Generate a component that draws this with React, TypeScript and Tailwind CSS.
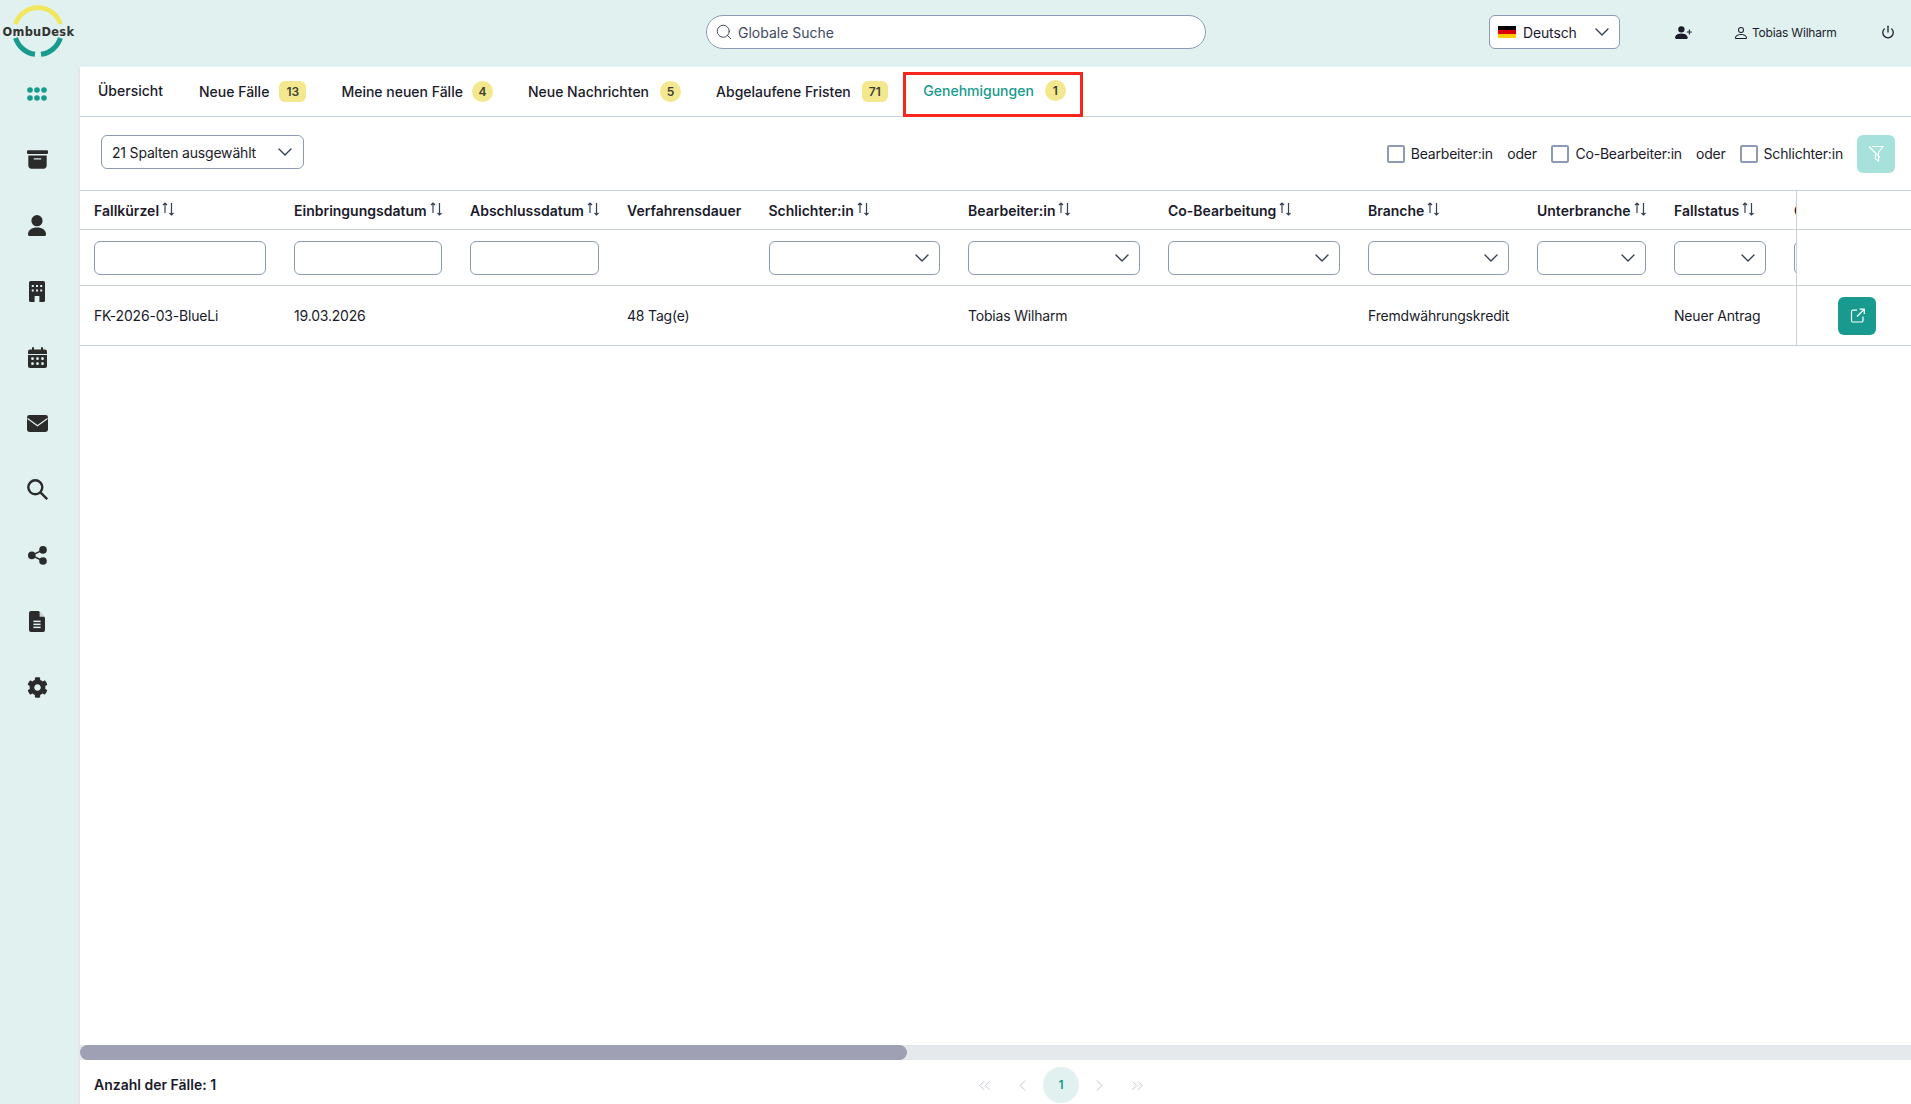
import { ChevronDown, ChevronLeft, ChevronRight, ChevronsLeft, ChevronsRight, Power, Search } from 'lucide-react';
import { BsArchiveFill, BsPerson, BsPersonPlusFill } from 'react-icons/bs';
import { FaCog } from 'react-icons/fa';

const BG = '#e0f1ef';

const GridDots = () => (
  <svg width="20" height="14" viewBox="0 0 20 14" fill="#189a8e">
    {[3, 10, 17].map((x) =>
      [3, 11].map((y) => <circle key={`${x}-${y}`} cx={x} cy={y} r="2.8" />)
    )}
  </svg>
);

const PersonIcon = () => (
  <svg width="18" height="21" viewBox="0 0 18 21" fill="currentColor">
    <circle cx="9" cy="5.7" r="5.6" />
    <path d="M0 19.5C0 15 4 12.6 9 12.6S18 15 18 19.5C18 20.4 17.4 21 16.5 21H1.5C0.6 21 0 20.4 0 19.5Z" />
  </svg>
);

const BuildingIcon = () => (
  <svg width="16" height="21" viewBox="0 0 16 21">
    <rect width="16" height="21" rx="1.6" fill="currentColor" />
    {[2.8, 7, 11.2].map((x) =>
      [4, 8.5].map((y) => <rect key={`${x}-${y}`} x={x} y={y} width="2" height="2" fill={BG} />)
    )}
    <rect x="5.6" y="15" width="4.8" height="6" fill={BG} />
  </svg>
);

const CalendarIcon = () => (
  <svg width="19" height="21" viewBox="0 0 19 21">
    <rect x="4" y="0" width="2" height="5" rx="1" fill="currentColor" />
    <rect x="13" y="0" width="2" height="5" rx="1" fill="currentColor" />
    <rect y="2.5" width="19" height="18.5" rx="2" fill="currentColor" />
    <rect y="7" width="19" height="1" fill={BG} />
    {[3.2, 8.2, 13.2].map((x) =>
      [10.3, 15.3].map((y) => <rect key={`${x}-${y}`} x={x} y={y} width="2.6" height="2.6" rx="0.8" fill={BG} />)
    )}
  </svg>
);

const MailIcon = () => (
  <svg width="21" height="17" viewBox="0 0 21 17" fill="none">
    <rect width="21" height="17" rx="2.4" fill="currentColor" />
    <path d="M0.5 3.6L10.5 10.8L20.5 3.6" stroke={BG} strokeWidth="1.2" />
  </svg>
);

const SearchIcon = () => (
  <svg width="21" height="21" viewBox="0 0 21 21" fill="none" stroke="currentColor" strokeWidth="2.4">
    <circle cx="8.3" cy="8.3" r="7" />
    <path d="M13.4 13.4L20.2 20.2" />
  </svg>
);

const ShareIcon = () => (
  <svg width="19" height="19" viewBox="0 0 19 19" fill="currentColor">
    <circle cx="3.8" cy="9.4" r="3.8" />
    <circle cx="15" cy="3.9" r="3.8" />
    <circle cx="15" cy="15" r="3.8" />
    <path d="M3.8 9.4L15 3.9M3.8 9.4L15 15" stroke="currentColor" strokeWidth="1.6" fill="none" />
  </svg>
);

const FileIcon = () => (
  <svg width="16" height="21" viewBox="0 0 16 21" fill="currentColor">
    <path d="M2 0H9.8L16 6.4V19A2 2 0 0 1 14 21H2A2 2 0 0 1 0 19V2A2 2 0 0 1 2 0Z" />
    <path d="M10.6 0.4L15.8 5.8H10.6Z" fill="#c9d6d5" />
    <rect x="4.4" y="9.6" width="7.2" height="1.5" fill={BG} />
    <rect x="4.4" y="12.6" width="7.2" height="1.5" fill={BG} />
    <rect x="4.4" y="15.6" width="7.2" height="1.5" fill={BG} />
  </svg>
);

const SortIcon = () => (
  <svg width="13" height="14" viewBox="0 0 13 14" fill="none" stroke="#334155" strokeWidth="1.2" className="shrink-0 -mt-[3px]">
    <path d="M3 11V1M1 3L3 1L5 3" />
    <path d="M9.5 1V13M7.5 11L9.5 13L11.5 11" />
  </svg>
);

const Logo = () => (
  <svg width="80" height="62" viewBox="0 0 80 62" fill="none">
    <path d="M15.6 24A23.5 23.5 0 0 1 60.4 24" stroke="#f1e75c" strokeWidth="4.8" />
    <path d="M15.6 38A23.5 23.5 0 0 0 35 54.3" stroke="#189a8e" strokeWidth="5" />
    <path d="M60.4 38A23.5 23.5 0 0 1 41 54.3" stroke="#189a8e" strokeWidth="5" />
    <text x="2.5" y="36" fill="#333333" fontFamily="DejaVu Sans, sans-serif" fontWeight="700" fontSize="11.4" letterSpacing="0.3">OmbuDesk</text>
  </svg>
);

const sideIcons = [
  <GridDots key="grid" />,
  <BsArchiveFill key="archive" size={21} />,
  <PersonIcon key="person" />,
  <BuildingIcon key="building" />,
  <CalendarIcon key="calendar" />,
  <MailIcon key="mail" />,
  <SearchIcon key="search" />,
  <ShareIcon key="share" />,
  <FileIcon key="file" />,
  <FaCog key="gear" size={21} />,
];

const tabs = [
  { label: 'Neue Fälle', count: '13', gap: 'ml-[10px]', badge: 'w-[27px] rounded-[6px]', next: 'mr-[35px]' },
  { label: 'Meine neuen Fälle', count: '4', gap: 'ml-[9px]', badge: 'w-[21px] rounded-full', next: 'mr-[35px]' },
  { label: 'Neue Nachrichten', count: '5', gap: 'ml-[11px]', badge: 'w-[21px] rounded-full', next: 'mr-[35px]' },
  { label: 'Abgelaufene Fristen', count: '71', gap: 'ml-[11px]', badge: 'w-[26px] rounded-[6px]', next: 'mr-[15.5px]' },
];

const columns = [
  { title: 'Fallkürzel', width: 'w-[200px]', filter: 'input', sort: true, value: 'FK-2026-03-BlueLi' },
  { title: 'Einbringungsdatum', width: 'w-[176px]', filter: 'input', sort: true, value: '19.03.2026' },
  { title: 'Abschlussdatum', width: 'w-[157px]', filter: 'input', sort: true, value: '' },
  { title: 'Verfahrensdauer', width: 'w-[141.5px]', filter: '', sort: false, value: '48 Tag(e)' },
  { title: 'Schlichter:in', width: 'w-[199.5px]', filter: 'select', sort: true, value: '' },
  { title: 'Bearbeiter:in', width: 'w-[200px]', filter: 'select', sort: true, value: 'Tobias Wilharm' },
  { title: 'Co-Bearbeitung', width: 'w-[200px]', filter: 'select', sort: true, value: '' },
  { title: 'Branche', width: 'w-[169px]', filter: 'select', sort: true, value: 'Fremdwährungskredit' },
  { title: 'Unterbranche', width: 'w-[137px]', filter: 'select', sort: true, value: '' },
  { title: 'Fallstatus', width: 'w-[120px]', filter: 'select', sort: true, value: 'Neuer Antrag' },
  { title: 'Ombudsstelle', width: 'w-[160px]', filter: 'select', sort: true, value: '' },
];

const Checkbox = ({ label }: { label: string }) => (
  <label className="flex items-center gap-[6px]">
    <span className="w-[18px] h-[18px] rounded-[2px] border-2 border-[#8c9ab5] bg-white" />
    <span>{label}</span>
  </label>
);

const App = () => {
  return (
    <div className="h-screen w-full overflow-hidden flex flex-col bg-white text-[#1b1b2b] text-[14px] font-[Inter,sans-serif]">
      <header className="h-[67px] shrink-0 bg-[#e0f1ef] flex items-center pb-[3px]">
        <div className="w-[706px] h-full">
          <Logo />
        </div>
        <div className="w-[500px] h-[34px] rounded-full border border-[#8c9ab5] bg-white flex items-center pl-[8px] gap-[5px] text-[#3f4a5f]">
          <Search size={18} strokeWidth={1.3} />
          <span>Globale Suche</span>
        </div>
        <div className="ml-[283px] w-[131px] h-[34px] rounded-[6px] border border-[#8c9ab5] bg-white flex items-center pl-[8px]">
          <span className="w-[18px] h-[13px] flex flex-col">
            <span className="flex-1 bg-black" />
            <span className="flex-1 bg-[#dd0000]" />
            <span className="flex-1 bg-[#ffce00]" />
          </span>
          <span className="ml-[7px] tracking-[-0.15px]">Deutsch</span>
          <ChevronDown size={24} strokeWidth={1.4} className="ml-auto mr-[5px] text-[#334155]" />
        </div>
        <BsPersonPlusFill size={17} className="ml-[55px]" />
        <div className="ml-[41px] mt-[1px] flex items-center gap-[3px]">
          <BsPerson size={16} />
          <span className="text-[12px] tracking-[-0.2px]">Tobias Wilharm</span>
        </div>
        <Power size={14} strokeWidth={2.2} className="ml-[44px]" />
      </header>

      <div className="flex-1 min-h-0 flex">
        <aside className="w-[80px] shrink-0 bg-[#e0f1ef] border-r-2 border-[#e3e7ea] flex flex-col items-center pr-[4px] pt-[16.5px] gap-[46px] text-[#2b2b2b]">
          {sideIcons.map((icon, index) => (
            <div key={index} className="h-[20px] flex items-center justify-center">
              {icon}
            </div>
          ))}
        </aside>

        <main className="flex-1 min-w-0 flex flex-col tracking-[-0.19px]">
          <nav className="h-[50px] shrink-0 border-b border-[#c8d0dc] flex items-center pl-[18px] font-medium tracking-normal">
            <span className="mr-[36px] -mt-[3px]">Übersicht</span>
            {tabs.map((tab) => (
              <div key={tab.label} className={`flex items-center ${tab.next}`}>
                <span>{tab.label}</span>
                <span className={`${tab.gap} ${tab.badge} h-[21px] bg-[#f3e88e] flex items-center justify-center text-[12px] font-semibold text-[#3f3f36]`}>
                  {tab.count}
                </span>
              </div>
            ))}
            <div className="h-[45px] mt-[5px] w-[180px] border-[3px] border-[#f6261c] flex items-center pl-[17px] pb-[7px] text-[#189a8e]">
              <span>Genehmigungen</span>
              <span className="ml-[11px] w-[21px] h-[21px] rounded-full bg-[#f3e88e] flex items-center justify-center text-[12px] font-semibold text-[#3f3f36]">
                1
              </span>
            </div>
          </nav>

          <div className="h-[74px] shrink-0 border-b border-[#c8d0dc] flex items-center justify-between pl-[21px] pr-[16px]">
            <div className="w-[203px] h-[34px] -mt-[3px] rounded-[6px] border border-[#8c9ab5] flex items-center pl-[10px] pr-[6px]">
              <span>21 Spalten ausgewählt</span>
              <ChevronDown size={24} strokeWidth={1.4} className="ml-auto text-[#334155]" />
            </div>
            <div className="flex items-center">
              <Checkbox label="Bearbeiter:in" />
              <span className="mx-[14.5px]">oder</span>
              <Checkbox label="Co-Bearbeiter:in" />
              <span className="mx-[14px]">oder</span>
              <Checkbox label="Schlichter:in" />
              <button className="ml-[14px] w-[38px] h-[38px] rounded-[6px] bg-[#a6e1dc] flex items-center justify-center">
                <svg width="16" height="17" viewBox="0 0 16 17" fill="none" stroke="white" strokeWidth="1.1">
                  <path d="M4 1.5H15L10.5 7.5V16L7.5 14V9.5" />
                  <path d="M1 1.5L12 12.5" />
                </svg>
              </button>
            </div>
          </div>

          <div className="flex shrink-0">
            <div className="flex-1 min-w-0 overflow-hidden">
              <div className="h-[39px] border-b border-[#c8d0dc] flex font-semibold tracking-normal">
                {columns.map((col) => (
                  <div key={col.title} className={`${col.width} shrink-0 px-[14px] flex items-center gap-[3px] whitespace-nowrap`}>
                    <span>{col.title}</span>
                    {col.sort && <SortIcon />}
                  </div>
                ))}
              </div>
              <div className="h-[56px] border-b border-[#c8d0dc] flex">
                {columns.map((col) => (
                  <div key={col.title} className={`${col.width} shrink-0 px-[14px] flex items-center`}>
                    {col.filter && (
                      <div className="w-full h-[34px] rounded-[6px] border border-[#8c9ab5] flex items-center justify-end pr-[5px]">
                        {col.filter === 'select' && <ChevronDown size={24} strokeWidth={1.4} className="text-[#334155]" />}
                      </div>
                    )}
                  </div>
                ))}
              </div>
              <div className="h-[60px] border-b border-[#c8d0dc] flex">
                {columns.map((col) => (
                  <div key={col.title} className={`${col.width} shrink-0 px-[14px] flex items-center whitespace-nowrap`}>
                    {col.value}
                  </div>
                ))}
              </div>
            </div>
            <div className="w-[115px] shrink-0 border-l border-[#c8d0dc]">
              <div className="h-[39px] border-b border-[#c8d0dc]" />
              <div className="h-[56px] border-b border-[#c8d0dc]" />
              <div className="h-[60px] border-b border-[#c8d0dc] flex items-center pl-[41px]">
                <button className="w-[38px] h-[38px] rounded-[6px] bg-[#189a8e] flex items-center justify-center">
                  <svg width="15" height="15" viewBox="0 0 15 15" fill="none" stroke="white" strokeWidth="1.2">
                    <path d="M7 2.2H3A1.5 1.5 0 0 0 1.5 3.7V12.5A1.5 1.5 0 0 0 3 14H11.5A1.5 1.5 0 0 0 13 12.5V8.5" />
                    <path d="M7 8.5L14 1.5M9.5 1.2H14.3V6" />
                  </svg>
                </button>
              </div>
            </div>
          </div>

          <div className="flex-1" />

          <div className="h-[15px] shrink-0 bg-[#e5e9ec]">
            <div className="w-[827px] h-full rounded-full bg-[#a0a0b4]" />
          </div>

          <footer className="h-[44px] shrink-0 relative flex items-center pl-[14px] pt-[4px] font-semibold tracking-normal">
            <span>Anzahl der Fälle: 1</span>
            <div className="absolute left-[886px] top-[7px] flex items-center text-[#b7bec9] font-normal">
              <span className="w-[36px] flex justify-center"><ChevronsLeft size={19} strokeWidth={1.1} /></span>
              <span className="w-[41px] flex justify-center"><ChevronLeft size={19} strokeWidth={1.1} /></span>
              <span className="w-[36px] h-[36px] rounded-full bg-[#e0f1ef] text-[#189a8e] font-semibold text-[12px] flex items-center justify-center">1</span>
              <span className="w-[40px] flex justify-center"><ChevronRight size={19} strokeWidth={1.1} /></span>
              <span className="w-[36px] flex justify-center"><ChevronsRight size={19} strokeWidth={1.1} /></span>
            </div>
          </footer>
        </main>
      </div>
    </div>
  );
};

export default App;
